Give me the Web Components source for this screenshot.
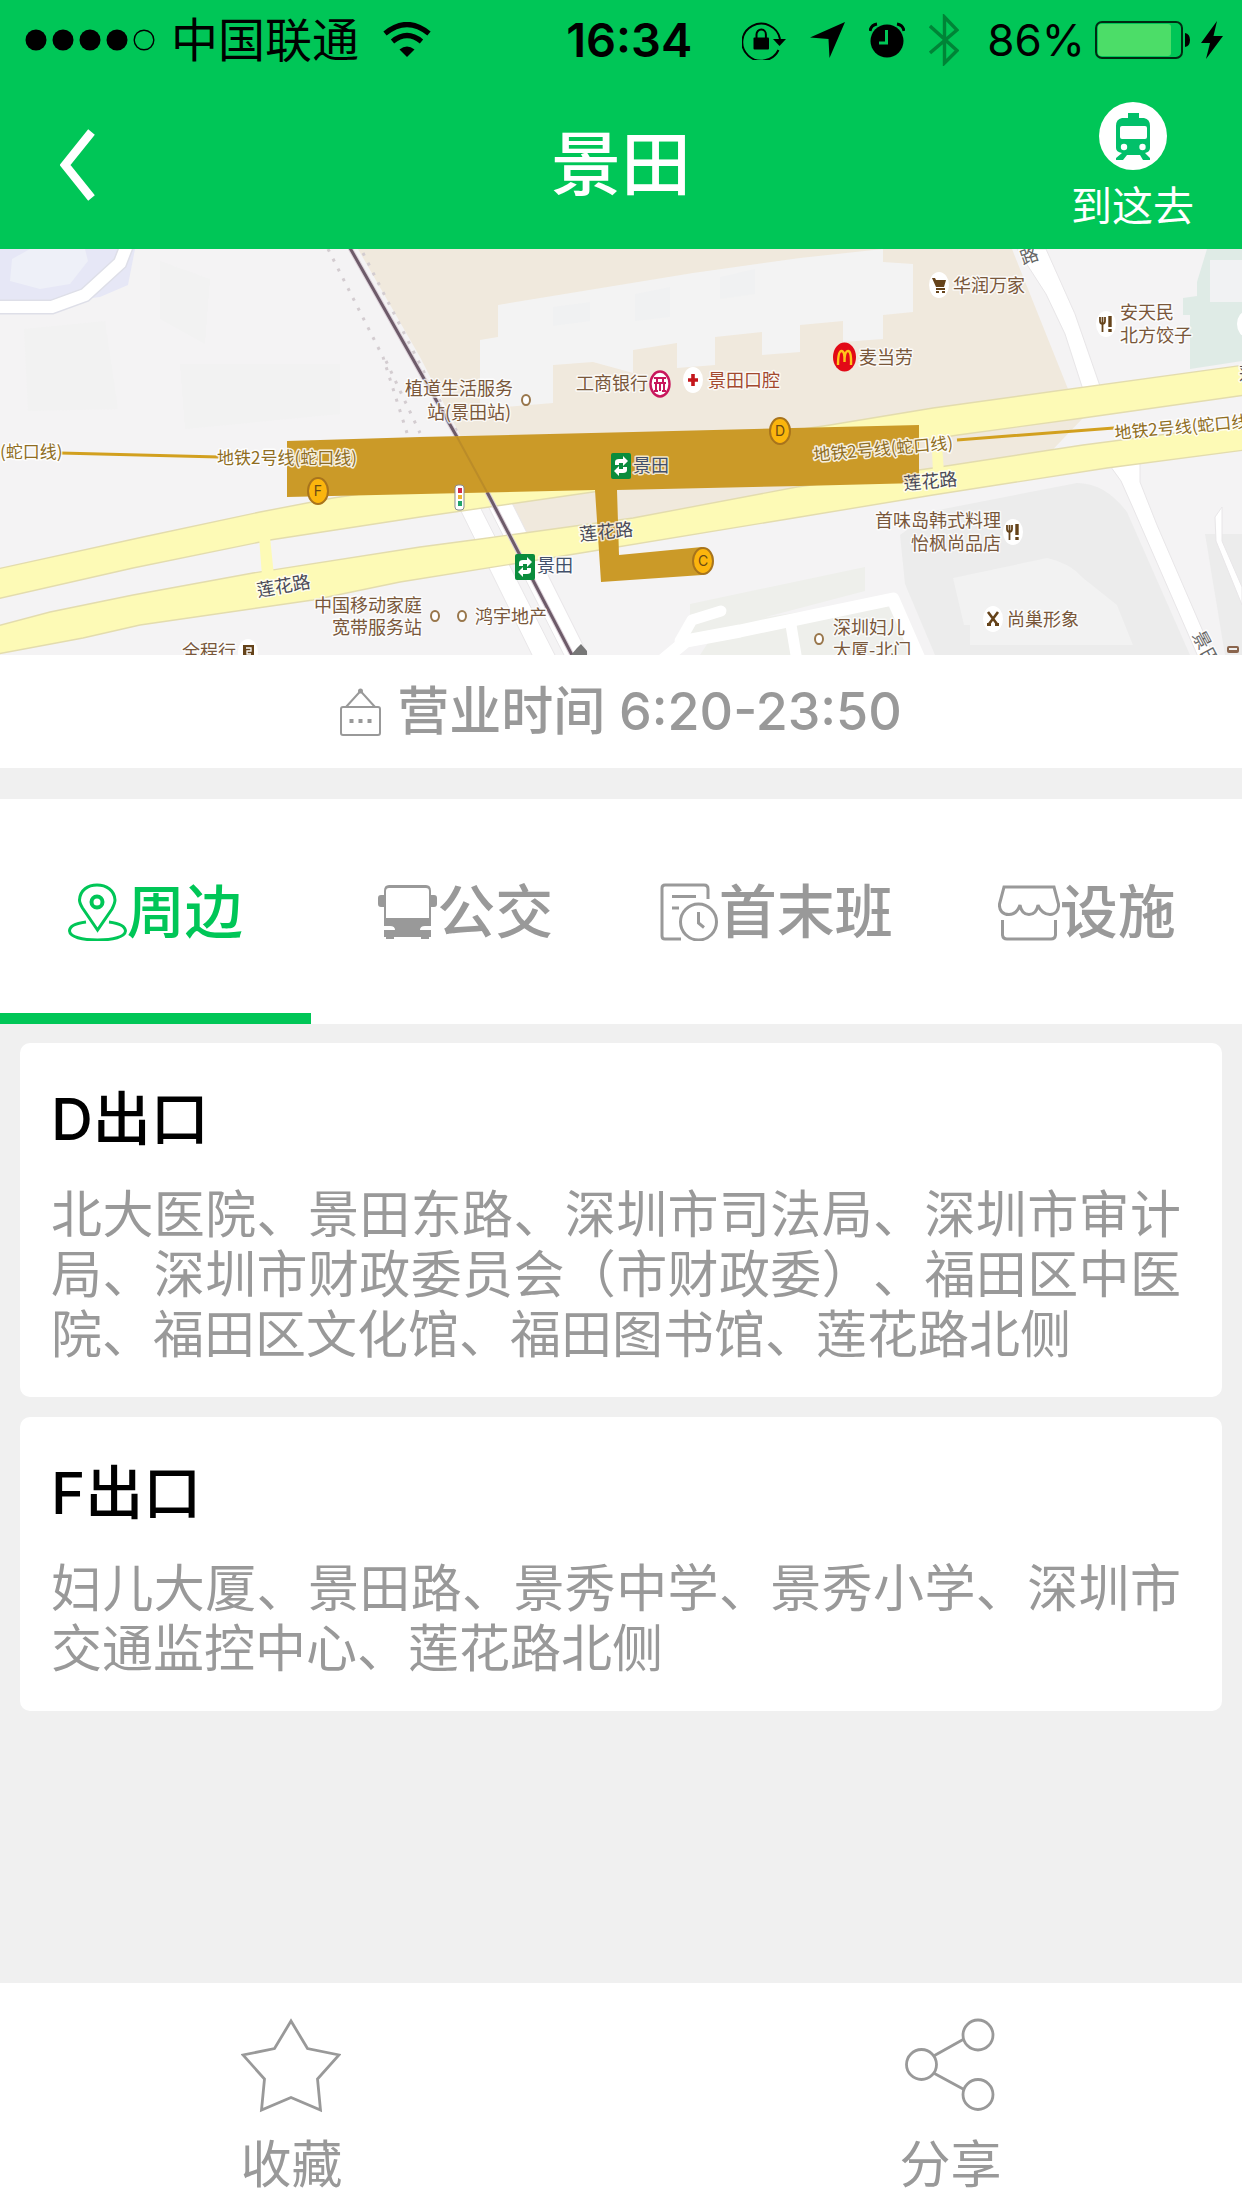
<!DOCTYPE html>
<html lang="zh-CN">
<head>
<meta charset="utf-8">
<meta name="viewport" content="width=device-width, initial-scale=1">
<title>景田</title>
<style>
  :root {
    --green: #00c657;
    --grey: #999;
    --page: #f0f0f0;
  }
  * { box-sizing: border-box; }
  body {
    margin: 0;
    min-height: 100vh;
    display: flex;
    flex-direction: column;
    background: var(--page);
    color: #000;
    font-family: Inter, "Noto Sans CJK SC", sans-serif;
    text-spacing-trim: space-all;
  }
  main { display: flex; flex-direction: column; gap: 20px; padding: 19px 20px 20px; }
  action-bar { margin-top: auto; }
</style>
</head>
<body>
<status-bar carrier="中国联通" time="16:34" battery="86%"></status-bar>
<nav-bar>景田</nav-bar>
<station-map></station-map>
<business-hours>营业时间 6:20-23:50</business-hours>
<tab-bar>
  <tab-item icon="pin" active>周边</tab-item>
  <tab-item icon="bus">公交</tab-item>
  <tab-item icon="schedule">首末班</tab-item>
  <tab-item icon="shop">设施</tab-item>
</tab-bar>
<main>
  <exit-card name="D出口">北大医院、景田东路、深圳市司法局、深圳市审计局、深圳市财政委员会（市财政委）、福田区中医院、福田区文化馆、福田图书馆、莲花路北侧</exit-card>
  <exit-card name="F出口">妇儿大厦、景田路、景秀中学、景秀小学、深圳市交通监控中心、莲花路北侧</exit-card>
</main>
<action-bar>
  <action-item icon="star">收藏</action-item>
  <action-item icon="share">分享</action-item>
</action-bar>

<script>
const RESET = `*{box-sizing:border-box}button,a{font:inherit;color:inherit;background:none;border:0;margin:0;padding:0;cursor:pointer;text-decoration:none}svg{display:block;flex:none}`;

class BaseElement extends HTMLElement {
  connectedCallback() {
    if (this.shadowRoot) return;
    this.attachShadow({ mode: 'open' }).innerHTML = `<style>${RESET}${this.css()}</style>${this.html()}`;
  }
}

customElements.define('status-bar', class extends BaseElement {
  css() { return `
    :host{display:flex;align-items:center;height:80px;padding:0 19px 0 25px;background:var(--green);font-size:47px;line-height:60px}
    .left{flex:1;display:flex;align-items:center}
    .carrier{margin:0 24px 0 16px}
    .time{font-weight:600;margin-right:50px}
    .right{display:flex;align-items:center;gap:28px}
    .icons{display:flex;align-items:center;gap:24px}
    .power{display:flex;align-items:center;gap:10px}
    .pct{font-size:44px}`; }
  html() { return `
    <div class="left">
      <svg width="130" height="22" viewBox="0 0 130 22"><circle cx="11" cy="11" r="10.5"/><circle cx="38" cy="11" r="10.5"/><circle cx="65" cy="11" r="10.5"/><circle cx="92" cy="11" r="10.5"/><circle cx="119" cy="11" r="9.8" fill="none" stroke="#000" stroke-width="1.4"/></svg>
      <span class="carrier">${this.getAttribute('carrier')}</span>
      <svg width="48" height="36" viewBox="0 0 48 36"><path d="M24 35 16.500 27.500Q24 21.500 31.500 27.500Z"/><path d="M9.500 19.500Q24 7.500 38.500 19.500M2 11.500Q24-6.500 46 11.500" fill="none" stroke="#000" stroke-width="5.200"/></svg>
    </div>
    <span class="time">${this.getAttribute('time')}</span>
    <div class="right">
      <div class="icons">
        <svg width="44" height="40" viewBox="0 0 44 40"><path d="M36.500 30A19 18.500 0 1 1 38 19" fill="none" stroke="#000" stroke-width="2"/><path d="M31 19H44L37.500 26Z"/><rect x="11.500" y="17.500" width="15.500" height="12" rx="1"/><path d="M14.500 19V14.500a4.700 5 0 0 1 9.400 0V19" fill="none" stroke="#000" stroke-width="2"/></svg>
        <svg width="35" height="36" viewBox="0 0 35 36"><path d="M35 0 19.500 36 18.500 17 0 15.500Z"/></svg>
        <svg width="36" height="36" viewBox="0 0 36 36"><circle cx="18" cy="19" r="16.500"/><path d="M17.500 8V21H10" fill="none" stroke="#00c657" stroke-width="3"/><path d="M1 9Q2 3 8 2M28 2Q34 3 35 9" fill="none" stroke="#000" stroke-width="3"/></svg>
        <svg width="30" height="52" viewBox="0 0 30 52"><path d="M1 12 28 36.500 15.500 49V3L28 16 1 39" fill="none" stroke="#008437" stroke-width="3.400"/></svg>
      </div>
      <div class="power">
        <span class="pct">${this.getAttribute('battery')}</span>
        <svg width="96" height="38" viewBox="0 0 96 38"><rect x="1" y="1" width="86" height="36" rx="6" fill="none" stroke="#002b12" stroke-width="2"/><rect x="3" y="3" width="73" height="32" rx="3" fill="#4cdd68"/><path d="M90 12q5 1 5 7t-5 7z"/></svg>
        <svg width="22" height="38" viewBox="0 0 22 38"><path d="M16 0 0 22H9L5 38 22 15H12.500Z"/></svg>
      </div>
    </div>`; }
});

customElements.define('nav-bar', class extends BaseElement {
  css() { return `
    :host{display:grid;grid-template-columns:1fr auto 1fr;align-items:center;height:169px;padding:0 48px;background:var(--green);color:#fff}
    h1{margin:0;font-size:70px;line-height:80px;font-weight:500}
    .back{justify-self:start;padding:0 12px}
    .go{justify-self:end;display:flex;flex-direction:column;align-items:center;gap:14px;font-size:41px;line-height:44px}`; }
  html() { return `
    <button class="back" aria-label="返回"><svg width="36" height="72" viewBox="0 0 36 72"><path d="M31.500 3 5 36 31.500 69" fill="none" stroke="#fff" stroke-width="8.500"/></svg></button>
    <h1><slot></slot></h1>
    <button class="go"><svg width="68" height="68" viewBox="0 0 68 68"><circle cx="34" cy="34" r="34" fill="#fff"/><g fill="#02c06a"><rect x="29" y="11" width="11" height="6"/><path d="M23 16H45Q51 17 51 24V46Q51 50 46 51L51 56V58H44L41 53H28L24 58H17V56L23 51Q17 50 17 46V24Q17 17 23 16Z"/></g><rect x="21" y="24" width="27" height="13" rx="2" fill="#fff"/><circle cx="25" cy="45" r="3.200" fill="#fff"/><circle cx="43.500" cy="45" r="3.200" fill="#fff"/></svg><span>到这去</span></button>`; }
});

const MAP_LABELS = [
  ['植道生活服务', 405, 146], ['站(景田站)', 427, 170],
  ['工商银行', 576, 141], ['景田口腔', 708, 138, '#a3492f'], ['麦当劳', 859, 115],
  ['华润万家', 953, 43], ['安天民', 1120, 70], ['北方饺子', 1120, 93],
  ['中国移动家庭', 314, 363], ['宽带服务站', 332, 385], ['鸿宇地产', 475, 374],
  ['全程行', 182, 409], ['首味岛韩式料理', 875, 278], ['怡枫尚品店', 911, 301],
  ['尚巢形象', 1007, 377], ['深圳妇儿', 833, 385], ['大厦-北门', 833, 408],
  ['景田', 633, 223, '#42506a'], ['景田', 537, 323, '#42506a'],
  ['莲花路', 258, 348, '#4a4a58', -10], ['莲花路', 580, 292, '#4a4a58', -6], ['莲花路', 904, 241, '#4a4a58', -5],
  ['路', 1023, 16, '#666', -20], ['景', 1192, 386, '#666', 62], ['田', 1200, 403, '#666', 62],
  ['莲', 1239, 131, '#4a4a58']
];
const LINE_LABELS = [
  ['(蛇口线)', 0, 209, 0], ['地铁2号线(蛇口线)', 217, 215, 0],
  ['地铁2号线(蛇口线)', 814, 212, -5], ['地铁2号线(蛇口线)', 1115, 190, -5]
];

customElements.define('station-map', class extends BaseElement {
  css() { return `
    :host{display:block}
    svg{width:100%;height:auto}
    text{font-family:"Noto Sans CJK SC",sans-serif;font-size:18px;paint-order:stroke;stroke:#fff;stroke-width:3px;stroke-opacity:.75;stroke-linejoin:round}
    .line{font-size:17px;fill:#8f6d22;stroke-opacity:.85}
    .exit{font-family:Inter,sans-serif;font-size:14px;fill:#6b4a12;stroke:none;text-anchor:middle}`; }
  html() {
    const label = ([t, x, y, c = '#79573a', r = 0]) => `<text x="${x}" y="${y}" fill="${c}" transform="rotate(${r} ${x} ${y})">${t}</text>`;
    const line = ([t, x, y, r]) => `<text class="line" x="${x}" y="${y}" transform="rotate(${r} ${x} ${y})">${t}</text>`;
    const exit = (t, x, y) => `<ellipse cx="${x}" cy="${y}" rx="10" ry="13" fill="#fbb50d" stroke="#a8741c" stroke-width="2"/><text class="exit" x="${x}" y="${y + 5}">${t}</text>`;
    const metro = (x, y) => `<g transform="translate(${x} ${y})"><rect width="20" height="26" rx="2" fill="#0a8c3c"/><path d="M4 12V9q0-3 4-3h4V3l5 5-5 5v-3H8v2zM16 14v3q0 3-4 3H8v3l-5-5 5-5v3h4v-2z" fill="#fff"/></g>`;
    const disc = (x, y) => `<ellipse cx="${x}" cy="${y}" rx="10" ry="13" fill="#fff"/>`;
    const dot = (x, y) => `<ellipse cx="${x}" cy="${y}" rx="4" ry="5" fill="#fff" stroke="#99774c" stroke-width="2"/>`;
    const fork = (x, y) => `${disc(x, y)}<g transform="translate(${x} ${y})" fill="none" stroke="#65431a" stroke-width="1.800"><path d="M-6-7v4q0 3 2.500 3T-1-3v-4M-3.500-7V8"/><path d="M4-8V3M4 5V8" stroke-width="3.400"/></g>`;
    return `
    <svg viewBox="0 0 1242 406" role="img" aria-label="景田站周边地图">
      <rect width="1242" height="406" fill="#f4f3f4"/>
      <path d="M0 0H135L128 36 100 48 60 53H0Z" fill="#e6e7f6"/>
      <path d="M12 10 30 0H85L88 12 70 35 40 40 10 32Z" fill="#eef0f8"/>
      <path d="M-5 58H52L85 46 120 14 127-4" fill="none" stroke="#dedfe8" stroke-width="15"/>
      <path d="M-5 58H52L85 46 120 14 127-4" fill="none" stroke="#fff" stroke-width="12"/>
      <path d="M24 80 105 72 118 160 28 162ZM160 12 210 30 205 95 160 70ZM180 115H340V165L185 180Z" fill="#f2f2f2"/>
      <path d="M358 0H1012L1068 140 1083 169 1040 214 800 268 520 300 500 251 462 190 420 108Z" fill="#f0e9dd"/>
      <path d="M498 56 693 24 800 9 883 0V13L913 15V63L883 66V90L843 93V72L800 76V103L762 106V83L715 88V116L677 119V94L633 101V124L593 113 553 116V154L480 160V91L498 88Z" fill="#f3f3f3"/>
      <path d="M553 58 590 53V72L553 77ZM635 45 670 38V68L635 72ZM720 28 755 20V45L720 50Z" fill="#f0f1f2"/>
      <path d="M1207 0 1197 33V47L1183 49V66H1190V120L1242 112V0Z" fill="#dfebe6"/>
      <path d="M1210 11H1242V53H1210Z" fill="#f1f2f3"/>
      <path d="M900 286 933 262 1077 234Q1105 234 1127 263L1190 406H935L905 335Z" fill="#ececec"/>
      <path d="M953 329 1047 309Q1070 314 1083 329L1117 356 1133 396H970V376H964Z" fill="#f2f2f2"/>
      <path d="M690 355 865 318V342L690 388ZM700 406 720 375 885 350 912 406Z" fill="#eeefeb"/>
      <path d="M1205 285H1242V406H1225Z" fill="#ececec"/>

      <g fill="#fff" stroke="#e8e6e8">
        <path d="M1017 0H1046L1075 65 1100 137 1104 150H1086L1065 85 1046 45Z"/>
        <path d="M1108 214H1140V233L1157 276 1215 410H1199L1133 259 1121 232Z"/>
        <path d="M455 250H476L557 410H534Z"/>
        <path d="M484 246H508L590 410H566L485 251Z"/>
        <path d="M1215 268 1222 258V292L1242 338V356L1216 292Z"/>
      </g>
      <g fill="none" stroke="#fff" stroke-width="13" stroke-linejoin="round" stroke-linecap="round">
        <path d="M662 412 686 392 740 382 893 350 920 412"/>
        <path d="M680 392 692 371 721 362" stroke-width="11"/>
        <path d="M791 376 797 412" stroke-width="11"/>
      </g>

      <g fill="#fdfab6" stroke="#e3dcae" stroke-width="1.400">
        <path d="M-3 320 143 288 260 263 333 249 830 176 933 159 1245 116V146L1083 169 958 186 600 242 420 268 270 291 133 319-3 350Z"/>
        <path d="M-3 377 50 363 133 346 253 324 420 298 473 291 633 269 797 238 933 219 1083 196 1245 175V201L1107 219 933 246 800 268 587 303 400 333 313 351 140 376 83 389-3 405Z"/>
      </g>
      <path d="M259 288H270L274 327H262ZM931 180H941L944 224H933Z" fill="#fdfab6"/>

      <g fill="none" stroke="#d3ccd0" stroke-width="3" stroke-dasharray="3 8">
        <path d="M328 0 383 108 407 184"/><path d="M363 4 425 125 460 188"/><path d="M386 112 420 184"/>
      </g>
      <path d="M350-1 457 188M487 243 573 408" fill="none" stroke="#ddd2da" stroke-width="5"/>
      <path d="M350-1 457 188M487 243 573 408" fill="none" stroke="#6d5b69" stroke-width="3"/>
      <path d="M60 204 219 208M957 191 1114 179" stroke="#d2a01f" stroke-width="3"/>

      <path d="M287 192 420 188 633 183 919 176V234L800 237 617 241 619 306 702 298V326L601 333 595 241 287 248Z" fill="#cb9a28"/>
      <path d="M457 188 487 243" stroke="#bb8c28" stroke-width="2"/>
      <rect x="455" y="236" width="9" height="25" rx="3" fill="#fff" stroke="#8b8b91"/><rect x="458" y="239" width="4" height="5" fill="#d12c45"/><rect x="458" y="246" width="4" height="4" fill="#eeb433"/><rect x="458" y="252" width="4" height="5" fill="#22a36a"/>

      ${MAP_LABELS.map(label).join('')}
      ${LINE_LABELS.map(line).join('')}
      ${exit('F', 318, 242)}${exit('D', 780, 182)}${exit('C', 703, 312)}
      ${metro(611, 204)}${metro(515, 305)}
      ${dot(526, 151)}${dot(435, 367)}${dot(462, 367)}${dot(819, 390)}

      <ellipse cx="660" cy="135" rx="9.500" ry="12.500" fill="#fff" stroke="#c8165c" stroke-width="2.400"/><path d="M654 129H666M654 134H666M657 130V133M663 130V133M656 135V142M664 135V142M654 142H658M662 142H666M660 134V142" stroke="#c8165c" stroke-width="2"/>
      ${disc(693, 131)}<path d="M693 125V137M688 131H698" stroke="#c4161c" stroke-width="3.600"/>
      <ellipse cx="844.500" cy="108" rx="11.500" ry="14.500" fill="#e20a17"/><path d="M838 116Q838 102 841.500 102T844.500 113Q844.500 102 848 102T851 116" fill="none" stroke="#ffc51c" stroke-width="2.400"/>
      ${disc(939, 36)}<path d="M932 29H935L936 31H946L944 38H936ZM936 39H945V41H936ZM936 42H939V44H936ZM942 42H945V44H942Z" fill="#65431a"/>
      ${fork(1106, 75)}${fork(1013, 283)}
      ${disc(993, 370)}<path d="M988 363 997 375M998 363 989 375" stroke="#65431a" stroke-width="2.600"/><path d="M987 374h4v3h-4zM995 374h4v3h-4z" fill="#65431a"/>
      ${disc(248, 403)}<path d="M243 396H254V408H243Z" fill="#65431a"/><path d="M246 399H251V402H247V405H251" fill="none" stroke="#fff" stroke-width="1.300"/>
      ${disc(1247, 75)}
      <path d="M571 406 577 399 581 395 587 402V406Z" fill="#777"/>
      <rect x="1227" y="397" width="12" height="7" rx="2" fill="#8a654d"/><path d="M1229 399h8v2h-8z" fill="#eee"/>
    </svg>`;
  }
});

customElements.define('business-hours', class extends BaseElement {
  css() { return `
    :host{display:flex;align-items:center;justify-content:center;gap:15px;height:113px;background:#fff;color:var(--grey);font-size:52px;line-height:60px;font-weight:500;margin-bottom:31px}`; }
  html() { return `
    <svg width="42" height="48" viewBox="0 0 42 48" fill="none" stroke="#999" stroke-width="2"><rect x="1" y="19" width="39" height="28" rx="2"/><path d="M6 19 20.500 3 35 19"/><circle cx="20.500" cy="3" r="1.500"/><path d="M9.500 33h4M18.500 33h4M27.500 33h4" stroke-width="4"/></svg>
    <span><slot></slot></span>`; }
});

const TAB_ICONS = {
  pin: `<g fill="none" stroke="currentColor" stroke-width="3"><path d="M29.500 47 14.500 25Q11.500 20 11.500 17C12 7 20 2 29 2S46.500 7 47 17Q47 20 44 26Z"/><circle cx="29" cy="19" r="5.500" stroke-width="4"/><path d="M18 39Q1.500 41 1.500 48C2 54 14 57 29.500 57S57 54 57.500 48Q57 41 41 39"/></g>`,
  bus: `<path fill="currentColor" fill-rule="evenodd" d="M11 2H48Q53 2 53 8V12H56Q59 12 59 15V21Q59 24 56 24H53V54H51V56H43V54H16V56H8V54H6V24H3Q0 24 0 21V15Q0 12 3 12H6V8Q6 2 11 2ZM11 5Q8 5 8 8V35H51V8Q51 5 48 5ZM6 43V47H17Q17 43 12 43ZM53 43H47Q42 43 42 47H53Z"/>`,
  schedule: `<g fill="none" stroke="currentColor" stroke-width="3"><path d="M21 56H5Q2 56 2 53V5Q2 2 5 2H44Q48 2 48 6V16M12 13.500H36M12 25H19"/><ellipse cx="38.500" cy="39" rx="18" ry="18"/><path d="M38.500 29V40L44 44.500"/></g>`,
  shop: `<g fill="none" stroke="currentColor" stroke-width="3"><path d="M6 4H56L60.500 21C61 28 57 31.500 52 31.500S42 28 40 22C39 28 36 31.500 31 31.500S23 28 22 22C20 28 17 31.500 11 31.500S1 28 1.500 21ZM4.500 37V52Q5 56 9 56H53Q57 56 57.500 52V37"/></g>`
};

customElements.define('tab-bar', class extends BaseElement {
  css() { return `:host{display:grid;grid-template-columns:repeat(4,1fr);height:225px;background:#fff}`; }
  html() { return `<slot></slot>`; }
});

customElements.define('tab-item', class extends BaseElement {
  css() { return `
    :host{display:flex;color:var(--grey);font-size:58px;line-height:72px;font-weight:500}
    :host([active]){color:var(--green);box-shadow:inset 0 -11px var(--green)}
    button{flex:1;display:flex;align-items:center;justify-content:center}`; }
  html() {
    const icon = this.getAttribute('icon');
    const w = icon === 'shop' ? 62 : 59;
    return `<button aria-pressed="${this.hasAttribute('active')}"><svg width="${w}" height="58" viewBox="0 0 ${w} 58">${TAB_ICONS[icon]}</svg><span><slot></slot></span></button>`;
  }
});

customElements.define('exit-card', class extends BaseElement {
  css() { return `
    :host{display:block;padding:40px 41px 32px 31px;background:#fff;border-radius:10px}
    h2{margin:0 0 30px;font-size:58px;line-height:72px;font-weight:500}
    p{margin:0;color:var(--grey);font-size:51px;line-height:60px;text-align:justify}`; }
  html() { return `<h2>${this.getAttribute('name')}</h2><p><slot></slot></p>`; }
});

const ACTION_ICONS = {
  star: `<path d="M50 4 66.500 31.500 98 38 76.500 62 79.500 93 50 80.500 20.500 93 23.500 62 2 38 33.500 31.500Z"/>`,
  share: `<circle cx="21.500" cy="47.500" r="15"/><circle cx="78" cy="18" r="15"/><circle cx="78" cy="77.500" r="15"/><path d="M34.500 38.500 64 22M34.500 56.500 64 72.500"/>`
};

customElements.define('action-bar', class extends BaseElement {
  css() { return `:host{display:grid;grid-template-columns:1fr 1fr;gap:76px;height:225px;padding-top:34px;background:#fff}`; }
  html() { return `<slot></slot>`; }
});

customElements.define('action-item', class extends BaseElement {
  css() { return `
    :host{display:flex;justify-content:center;align-items:flex-start;color:var(--grey);font-size:51px;line-height:60px}
    button{display:flex;flex-direction:column;align-items:center;gap:22px}`; }
  html() { return `<button><svg width="100" height="96" viewBox="0 0 100 96" fill="none" stroke="currentColor" stroke-width="2.800">${ACTION_ICONS[this.getAttribute('icon')]}</svg><span><slot></slot></span></button>`; }
});
</script>
</body>
</html>
